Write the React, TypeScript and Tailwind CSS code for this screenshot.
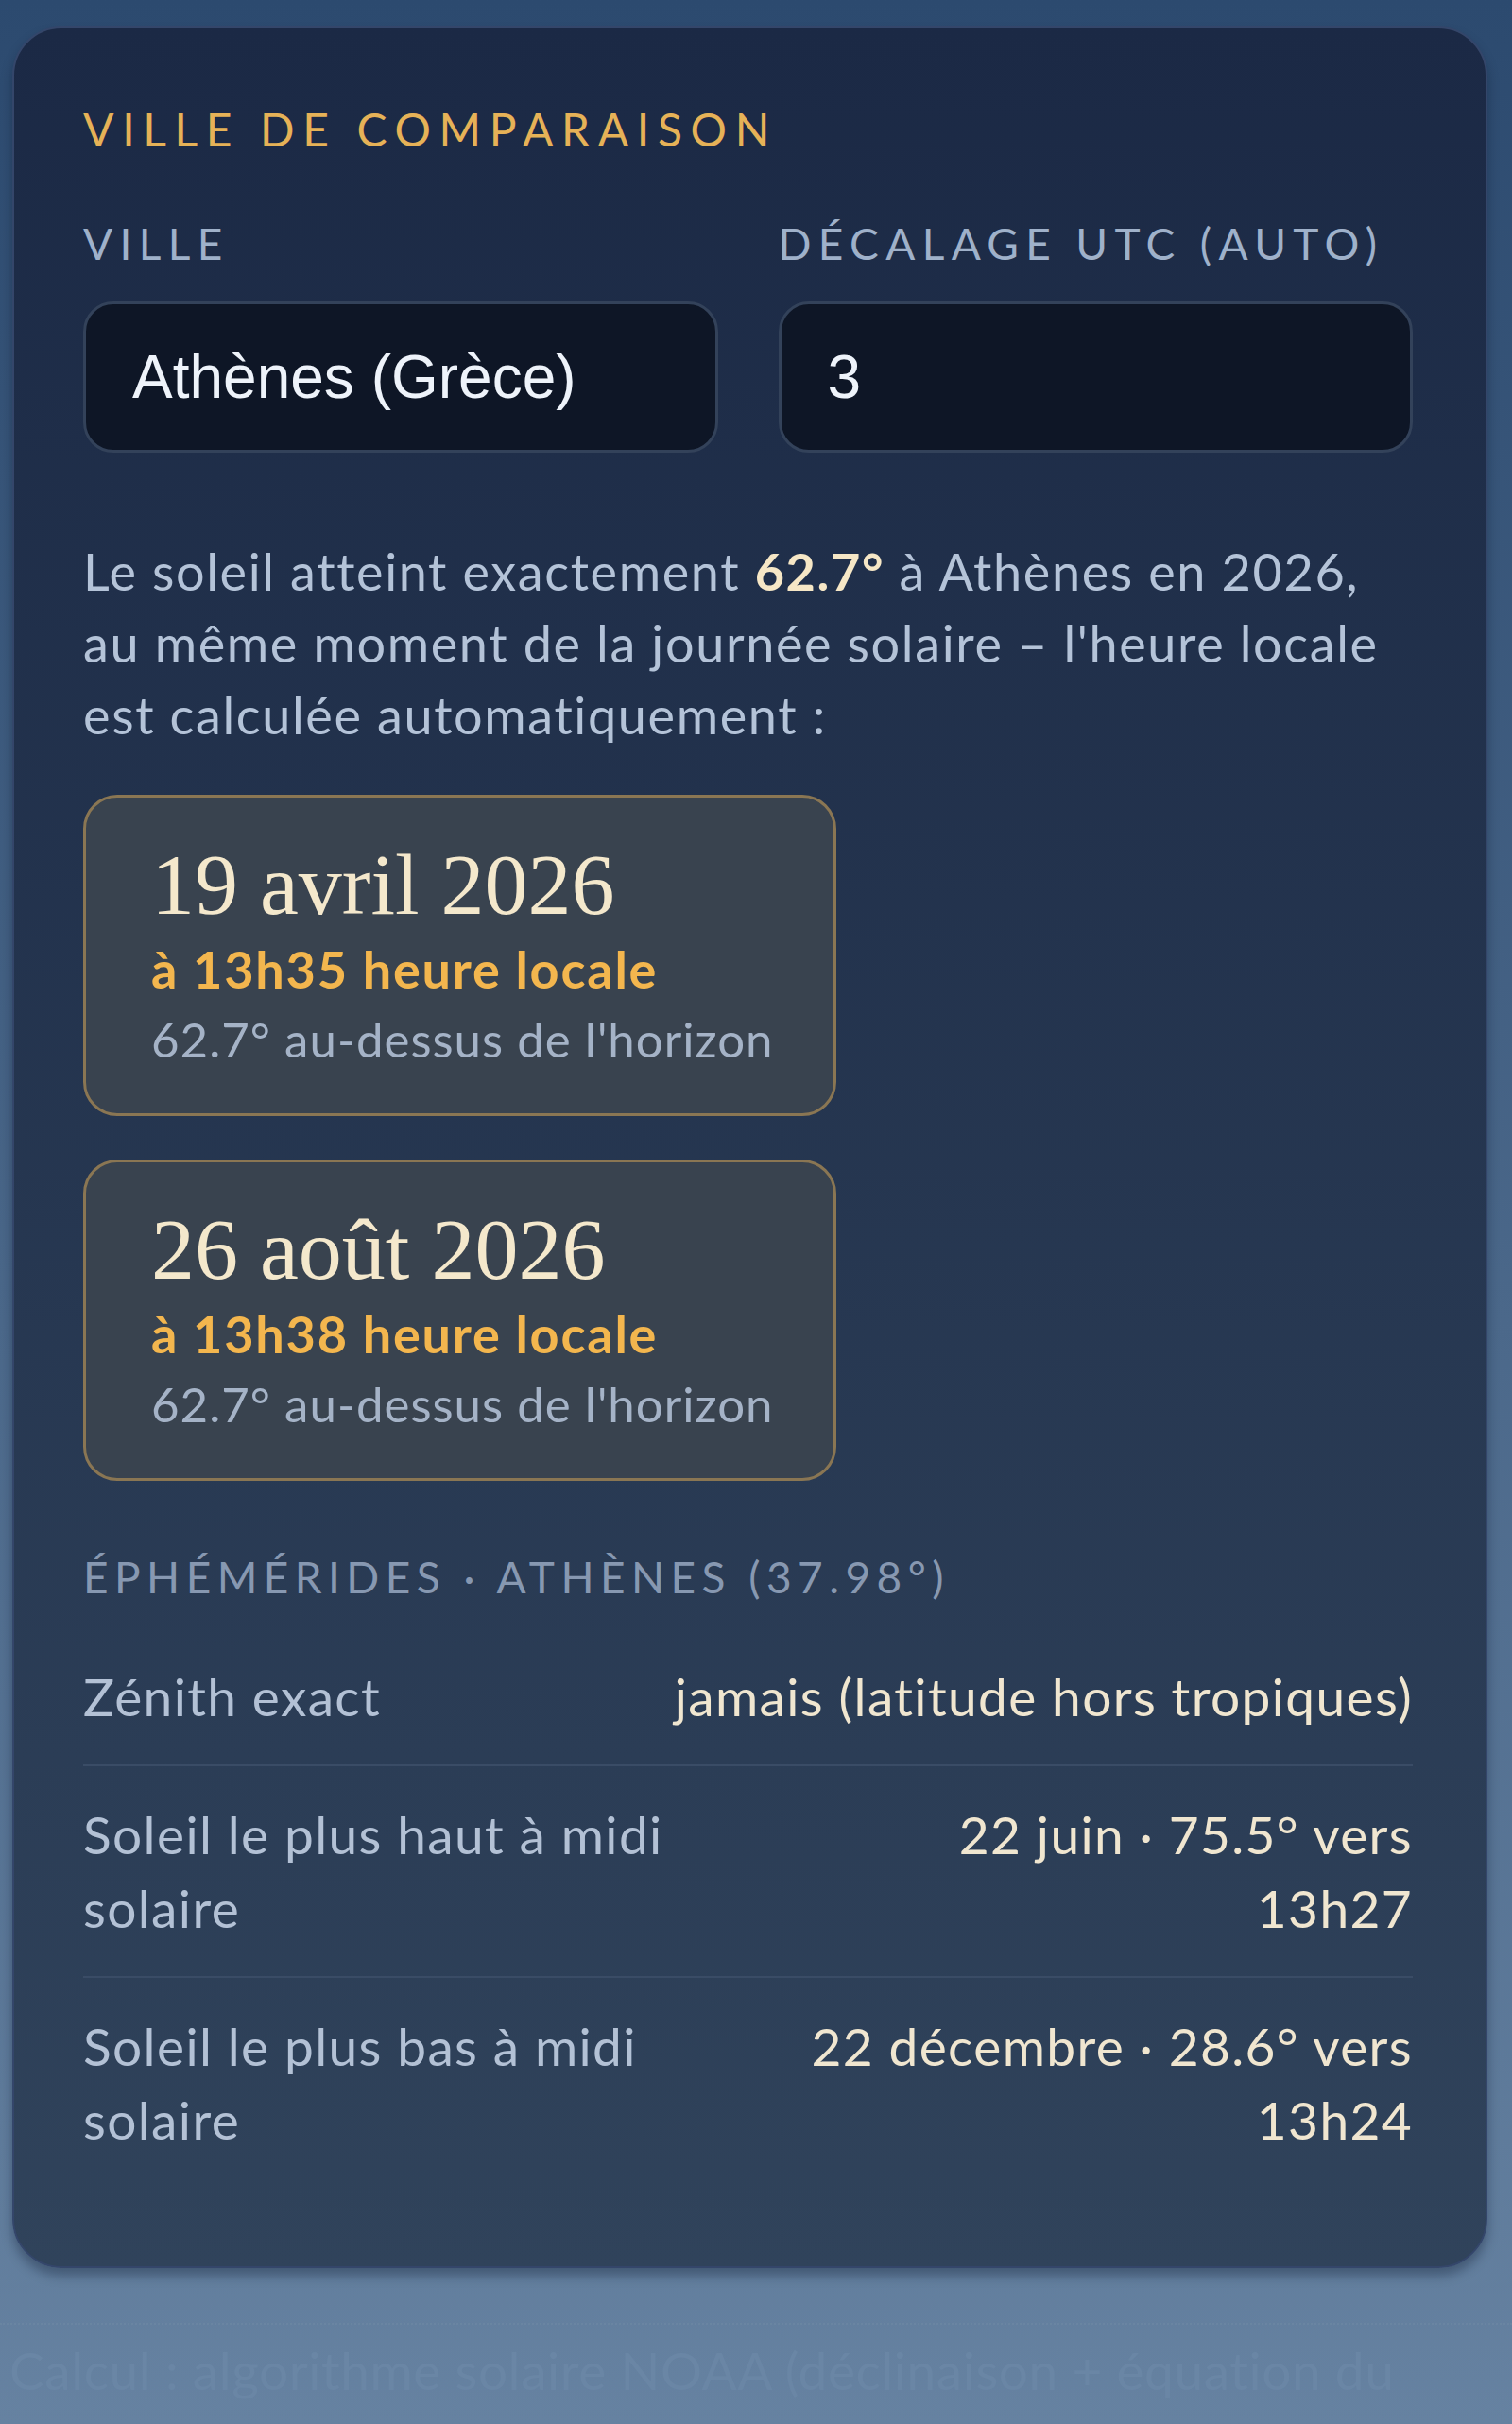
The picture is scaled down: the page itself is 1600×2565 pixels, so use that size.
import React from "react";

const sans = { fontFamily: "Lato, 'Noto Sans', sans-serif" };

function DateCard({ date, time }: { date: string; time: string }) {
  return (
    <div className="w-[797px] h-[340px] rounded-[36px] border-[3px] border-[#8a7653] bg-[#39434f] pl-[69px] pt-[44px]">
      <div className="text-[92px] leading-[96px] text-[#f4e8cc]" style={{ fontFamily: "'Liberation Serif', 'DejaVu Serif', serif" }}>
        {date}
      </div>
      <div className="mt-[5px] text-[54px] leading-[74px] font-bold tracking-[0.033em] text-[#f3b64e]">{time}</div>
      <div className="text-[51px] leading-[74px] tracking-[0.02em] text-[#a5b3c7]">62.7° au-dessus de l'horizon</div>
    </div>
  );
}

function Row({ label, value, last }: { label: string; value: string; last?: boolean }) {
  return (
    <div className={`flex justify-between gap-[56px] py-[33px] ${last ? "" : "border-b-2 border-[#3a4c66]"}`}>
      <div className="text-[55px] leading-[78px] tracking-[0.025em] text-[#b3c1d5]">{label}</div>
      <div className="text-[55px] leading-[78px] tracking-[0.025em] text-[#f0e6d0] text-right">{value}</div>
    </div>
  );
}

export default function App() {
  return (
    <div
      className="w-[1600px] h-[2565px] overflow-hidden bg-gradient-to-b from-[#2c4a6f] to-[#6682a1] pt-[28px]"
      style={sans}
    >
      <div className="ml-[13px] w-[1561px] rounded-[52px] border-2 border-[#34466a] bg-gradient-to-b from-[#1b2945] to-[#30435b] pl-[73px] pr-[77px] pt-[79px] pb-[83px] shadow-[0_8px_12px_rgba(10,20,40,0.35)]">
        <div className="text-[48px] leading-[56px] tracking-[0.18em] text-[#e6b257]">VILLE DE COMPARAISON</div>

        <div className="mt-[65px] grid grid-cols-2 gap-x-[64px]">
          <div className="text-[46px] leading-[56px] tracking-[0.16em] text-[#9fb1ca]">VILLE</div>
          <div className="text-[46px] leading-[56px] tracking-[0.16em] text-[#9fb1ca]">DÉCALAGE UTC (AUTO)</div>
          <div className="mt-[33px] h-[160px] rounded-[32px] border-[3px] border-[#33425a] bg-[#0e1626] flex items-center pl-[49px] text-[64px] text-[#eef3fa]" style={{ fontFamily: "'Liberation Sans', Arial, sans-serif" }}>
            Athènes (Grèce)
          </div>
          <div className="mt-[33px] h-[160px] rounded-[32px] border-[3px] border-[#33425a] bg-[#0e1626] flex items-center pl-[49px] text-[64px] text-[#eef3fa]" style={{ fontFamily: "'Liberation Sans', Arial, sans-serif" }}>
            3
          </div>
        </div>

        <p className="mt-[88px] text-[54px] leading-[76px] tracking-[0.03em] text-[#b4c3d8]">
          Le soleil atteint exactement <span className="font-bold text-[#f6e7c6]">62.7°</span> à Athènes en 2026, au même moment de la journée solaire – l'heure locale est calculée automatiquement :
        </p>

        <div className="mt-[46px] flex flex-col gap-[46px]">
          <DateCard date="19 avril 2026" time="à 13h35 heure locale" />
          <DateCard date="26 août 2026" time="à 13h38 heure locale" />
        </div>

        <div className="mt-[74px] text-[46px] leading-[56px] tracking-[0.14em] text-[#8798b1]">ÉPHÉMÉRIDES · ATHÈNES (37.98°)</div>

        <div className="mt-[26px]">
          <Row label="Zénith exact" value="jamais (latitude hors tropiques)" />
          <Row label="Soleil le plus haut à midi solaire" value="22 juin · 75.5° vers 13h27" />
          <Row label="Soleil le plus bas à midi solaire" value="22 décembre · 28.6° vers 13h24" last />
        </div>
      </div>

      <div className="mt-[58px] border-t-2 border-dotted border-[#6a85a2] pt-[9px] pl-[10px] pr-[30px]">
        <div className="text-[55px] leading-[78px] tracking-[0.01em] text-[#6a86a5]">
          Calcul : algorithme solaire NOAA (déclinaison + équation du temps)
        </div>
      </div>
    </div>
  );
}
